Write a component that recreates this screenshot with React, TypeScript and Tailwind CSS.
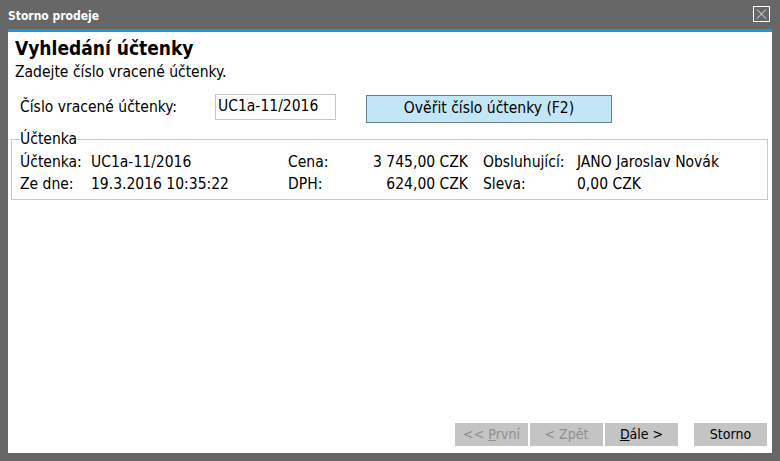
import React from 'react';

const font = { fontFamily: '"DejaVu Sans Condensed", "Liberation Sans", sans-serif' };

function CloseBox() {
  return (
    <svg width="17" height="16" viewBox="0 0 17 16" className="block">
      <rect x="0.5" y="0.5" width="16" height="15" fill="none" stroke="#ffffff" />
      <path d="M4 3.5 L13 12.5 M13 3.5 L4 12.5" stroke="#e8e8e8" strokeWidth="1" />
    </svg>
  );
}

interface NavButtonProps {
  children: React.ReactNode;
  disabled?: boolean;
}

function NavButton({ children, disabled }: NavButtonProps) {
  return (
    <button
      className={
        disabled
          ? 'w-[73px] h-[23px] bg-[#c4c4c4] text-[14px] text-[#8e8e8e] flex items-center justify-center'
          : 'w-[73px] h-[23px] bg-[#c4c4c4] text-[14px] text-black flex items-center justify-center'
      }
    >
      {children}
    </button>
  );
}

export default function App() {
  return (
    <div className="w-[780px] h-[461px] bg-[#676767] flex flex-col px-[8px] pb-[8px]" style={font}>
      {/* title bar */}
      <div className="h-[29px] flex items-center justify-between">
        <span className="text-[12px] font-bold text-white pt-[3px]">Storno prodeje</span>
        <div className="mr-[2px] mt-[-1px]">
          <CloseBox />
        </div>
      </div>
      <div className="h-[3px] bg-[#2397d4]" />

      <div className="flex-1 bg-white flex flex-col text-[15.5px] text-black">
        <div className="pl-[7px] pt-[4px]">
          <h1 className="text-[19px] font-bold leading-[24px]">Vyhledání účtenky</h1>
          <p className="leading-[20px] mt-[2px]">Zadejte číslo vracené účtenky.</p>
        </div>

        <div className="flex items-start pl-[12px] mt-[12px]">
          <span className="w-[195px] leading-[20px] mt-[3px]">Číslo vracené účtenky:</span>
          <div className="w-[121px] h-[26px] border border-[#c6c6c6] px-[2px] flex items-center">
            UC1a-11/2016
          </div>
          <button className="ml-[30px] mt-[1px] w-[246px] h-[28px] bg-[#c1e6f5] border border-[#6b7f88] text-[15.5px]">
            Ověřit číslo účtenky (F2)
          </button>
        </div>

        <fieldset className="ml-[3px] mr-[4px] mt-[7px] border border-[#c9c9c9] pb-[4px]">
          <legend className="ml-[8px] leading-[18px]">Účtenka</legend>
          <div className="grid grid-cols-[71px_197px_70px_110px_15px_94px_1fr] pl-[8px] leading-[22px] mt-[3px]">
            <span>Účtenka:</span>
            <span>UC1a-11/2016</span>
            <span>Cena:</span>
            <span className="text-right">3 745,00 CZK</span>
            <span />
            <span>Obsluhující:</span>
            <span>JANO Jaroslav Novák</span>

            <span>Ze dne:</span>
            <span>19.3.2016 10:35:22</span>
            <span>DPH:</span>
            <span className="text-right">624,00 CZK</span>
            <span />
            <span>Sleva:</span>
            <span>0,00 CZK</span>
          </div>
        </fieldset>

        <div className="mt-auto flex justify-end pr-[5px] pb-[7px]">
          <div className="flex gap-[2px]">
            <NavButton disabled>
              &lt;&lt; <span className="underline ml-[4px]">P</span>rvní
            </NavButton>
            <NavButton disabled>&lt; Zpět</NavButton>
            <NavButton>
              <span className="underline">D</span>ále &gt;
            </NavButton>
          </div>
          <div className="ml-[16px]">
            <NavButton>Storno</NavButton>
          </div>
        </div>
      </div>
    </div>
  );
}
